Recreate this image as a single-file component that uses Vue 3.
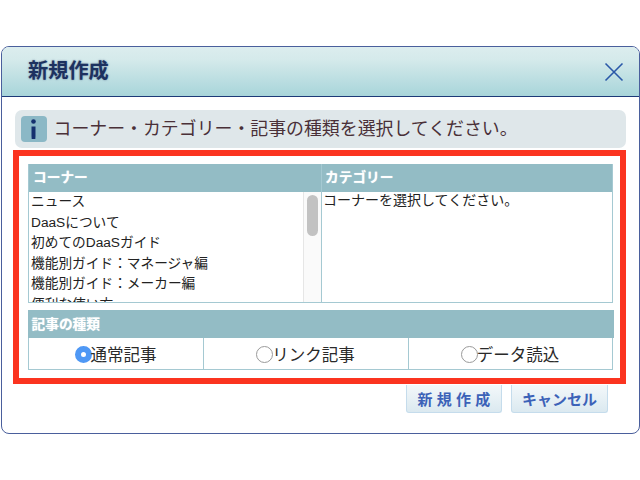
<script setup>
const corners = ['ニュース', 'DaaSについて', '初めてのDaaSガイド', '機能別ガイド\uFF1Aマネージャ編', '機能別ガイド\uFF1Aメーカー編', '便利な使い方']
const kinds = [
  { label: '通常記事', on: true },
  { label: 'リンク記事', on: false },
  { label: 'データ読込', on: false }
]
</script>

<template>
  <div class="page">
    <div class="dialog">
      <header class="head">
        <h1 class="title">新規作成</h1>
        <svg class="close" width="20" height="20" viewBox="0 0 20 20">
          <path d="M1.500 1.500 L18.500 18.500 M18.500 1.500 L1.500 18.500" stroke="#2a58a8" stroke-width="1.600" fill="none" />
        </svg>
      </header>
      <div class="body">
        <div class="info">
          <span class="info-icon">
            <svg width="26" height="26" viewBox="0 0 26 26">
              <circle cx="12.500" cy="5.500" r="2.300" fill="#14306e" />
              <path d="M10.500 10.500h4v9l-.2 3.500h-3.600l-.2-3.500z" fill="#14306e" />
            </svg>
          </span>
          <span class="info-text">コーナー・カテゴリー・記事の種類を選択してください。</span>
        </div>
        <section class="marked">
          <div class="lists">
            <div class="col col-left">
              <div class="bar">コーナー</div>
              <div class="list">
                <ul class="items">
                  <li v-for="c in corners" :key="c">{{ c }}</li>
                </ul>
                <div class="track"><div class="thumb"></div></div>
              </div>
            </div>
            <div class="col col-right">
              <div class="bar">カテゴリー</div>
              <div class="list hint">コーナーを選択してください。</div>
            </div>
          </div>
          <div class="kinds">
            <div class="bar">記事の種類</div>
            <div class="kind-row">
              <div v-for="k in kinds" :key="k.label" class="kind">
                <span class="radio" :class="{ on: k.on }"></span>{{ k.label }}
              </div>
            </div>
          </div>
        </section>
        <div class="actions">
          <button class="btn spaced">新規作成</button>
          <button class="btn wide">キャンセル</button>
        </div>
      </div>
    </div>
  </div>
</template>

<style>
html, body { margin: 0; background: #fff; }
</style>

<style scoped>
.page {
  width: 640px;
  height: 480px;
  box-sizing: border-box;
  padding: 46px 0 0 1px;
  overflow: hidden;
  background: #fff;
  font-family: "Liberation Sans", "Noto Sans CJK JP", sans-serif;
}
.dialog {
  width: 639px;
  height: 388px;
  box-sizing: border-box;
  border: 1.500px solid #4a5f9c;
  border-radius: 8px;
  overflow: hidden;
  background: #fff;
}
.head {
  height: 50px;
  box-sizing: border-box;
  border-bottom: 1px solid #1d3a78;
  background: linear-gradient(#dcedee 0%, #d5eaeb 25%, #a8d5da 100%);
  display: flex;
  align-items: center;
  justify-content: space-between;
  padding: 0 15px 0 26px;
}
.title {
  margin: 0 0 2px;
  font-size: 20.200px;
  line-height: 24px;
  font-weight: 700;
  color: #1d3160;
  text-shadow: 0 0 2px rgba(40, 60, 110, .6);
}
.close { margin-top: 1px; }
.body {
  padding: 13px 12px 0 12.500px;
}
.info {
  width: 611px;
  height: 38px;
  box-sizing: border-box;
  border-radius: 7px;
  background: #dfe7ea;
  padding: 0 0 0 6px;
  display: flex;
  align-items: center;
  gap: 7px;
}
.info-icon {
  width: 26px;
  height: 26px;
  border-radius: 4px;
  background: #8bb8c6;
  display: block;
}
.info-icon svg { display: block; }
.info-text {
  font-size: 17.900px;
  line-height: 24px;
  color: #4a3038;
}
.marked {
  width: 613px;
  height: 234px;
  margin: 2px 0 0 -1.500px;
  box-sizing: border-box;
  border: 6px solid #fb3420;
  padding: 8px 7px 0 9px;
  background: #fff;
}
.lists {
  display: flex;
  height: 139px;
  box-sizing: border-box;
  border-bottom: 1.500px solid #a5c9d2;
}
.col { display: flex; flex-direction: column; min-width: 0; }
.col-left { width: 294px; border-left: 1.500px solid #a5c9d2; border-right: 1.500px solid #a5c9d2; box-sizing: border-box; }
.col-right { flex: 1; border-right: 1.500px solid #a5c9d2; }
.col-right .bar { padding-left: 3px; }
.bar {
  height: 28px;
  flex: none;
  box-sizing: border-box;
  background: #93bcc5;
  color: #fff;
  font-size: 13.700px;
  font-weight: 700;
  line-height: 28px;
  padding-left: 4px;
  text-shadow: 0 0 1px rgba(255, 255, 255, .7);
}
.list {
  flex: 1;
  min-height: 0;
  display: flex;
  overflow: hidden;
  font-size: 13.700px;
  line-height: 20.500px;
  color: #222;
}
.hint {
  display: block;
  line-height: 17px;
  padding-left: 1px;
  font-size: 14px;
}
.items {
  flex: 1;
  margin: 0;
  padding: 0 0 0 2px;
  list-style: none;
  white-space: nowrap;
}
.track {
  width: 18px;
  flex: none;
  box-sizing: border-box;
  background: #fafafa;
  border-left: 1px solid #e6e6e6;
  padding: 3px 0 0 3px;
}
.thumb {
  width: 11px;
  height: 41px;
  border-radius: 5.500px;
  background: #c2c2c2;
}
.kinds {
  margin-top: 7px;
  border: 1.500px solid #a5c9d2;
  border-top: 0;
}
.kinds .bar { margin: 0 -1.500px; height: 28px; line-height: 30px; }
.kind-row {
  display: grid;
  grid-template-columns: 174px 205px 1fr;
  height: 31px;
}
.kind {
  display: flex;
  align-items: center;
  justify-content: center;
  font-size: 16.500px;
  color: #2a2a2a;
  border-left: 1.500px solid #a5c9d2;
}
.kind:first-child { border-left: 0; }
.radio {
  width: 17px;
  height: 17px;
  box-sizing: border-box;
  border: 1px solid #9a9a9a;
  border-radius: 50%;
  background: #fff;
  flex: none;
  margin: 2px -1px 0 -1px;
}
.radio.on {
  border: 6px solid #4f98f5;
}
.actions {
  display: flex;
  justify-content: flex-end;
  gap: 9px;
  padding-right: 19px;
  margin-top: 1px;
}
.btn {
  height: 28px;
  box-sizing: border-box;
  border: 1px solid #c5dcec;
  border-top: 0;
  border-radius: 0 0 3px 3px;
  background: linear-gradient(#f3f8fa, #dbe9f0);
  color: #3c62b8;
  font-family: inherit;
  font-size: 15px;
  font-weight: 700;
  padding: 0;
  width: 96px;
}
.btn.wide { width: 97px; }
.btn.spaced { letter-spacing: 4.300px; text-indent: 4px; }
</style>
